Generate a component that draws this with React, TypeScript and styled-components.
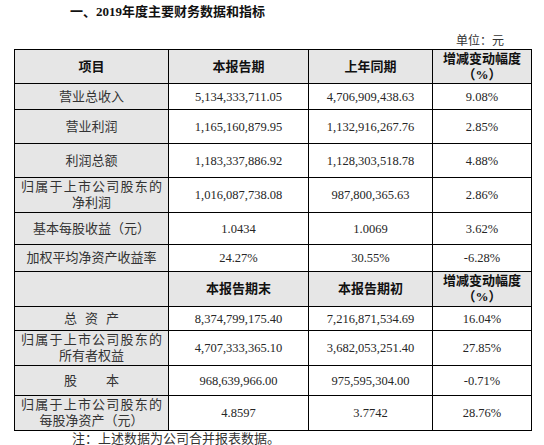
import styled, {createGlobalStyle} from "styled-components";

const GlobalStyle = createGlobalStyle`
  html, body {
    margin: 0;
    padding: 0;
    background: #fff;
  }

  body {
    font-family: "Liberation Serif", "Noto Sans CJK SC", serif;
    color: #222;
  }
`

const Page = styled.div`
  width: 544px;
  height: 445px;
  overflow: hidden;
`

const Title = styled.h1`
  margin: 0;
  padding: 3px 0 0 70px;
  font-family: "Liberation Serif", "Noto Sans CJK SC", serif;
  font-size: 13px;
  font-weight: 700;
  line-height: 18px;
  color: #111;
`

const Unit = styled.div`
  margin-top: 12px;
  padding-right: 40px;
  text-align: right;
  font-size: 12px;
  line-height: 16px;
  color: #333;
`

const Table = styled.table`
  margin-left: 14px;
  width: 517px;
  border-collapse: collapse;
  table-layout: fixed;
`

const Row = styled.tr<{ $h: number }>`
  height: ${p => p.$h}px;
`

const Cell = styled.td<{ $shade?: boolean, $bold?: boolean }>`
  border: 1px solid #000;
  padding: 0;
  text-align: center;
  vertical-align: middle;
  font-size: ${p => p.$bold ? "13px" : "12.5px"};
  font-weight: ${p => p.$bold ? 700 : 400};
  line-height: 16px;
  background: ${p => p.$shade ? "#e6e6e6" : "#fff"};
  color: ${p => p.$bold ? "#111" : "#262626"};
  white-space: nowrap;
`

const Label = styled.span<{ $gap?: number }>`
  font-size: 13px;
  color: #333;
  letter-spacing: ${p => p.$gap || 0}px;
  margin-right: ${p => -(p.$gap || 0)}px;
`

const Line = styled.span<{ $gap?: number }>`
  display: block;
  font-size: 13px;
  color: #333;
  letter-spacing: ${p => p.$gap || 0}px;
  margin-right: ${p => -(p.$gap || 0)}px;
`

const Note = styled.div`
  padding-left: 72px;
  font-size: 13px;
  line-height: 15px;
  color: #333;
`

type DataRow = {
    label: React.ReactNode
    cur: string
    prev: string
    pct: string
    h: number
}

const twoLine = (second: string) => <>
    <Line $gap={1.2}>归属于上市公司股东的</Line>
    <Line>{second}</Line>
</>

const firstRows: DataRow[] = [
    {label: <Label>营业总收入</Label>, cur: "5,134,333,711.05", prev: "4,706,909,438.63", pct: "9.08%", h: 26},
    {label: <Label>营业利润</Label>, cur: "1,165,160,879.95", prev: "1,132,916,267.76", pct: "2.85%", h: 34},
    {label: <Label>利润总额</Label>, cur: "1,183,337,886.92", prev: "1,128,303,518.78", pct: "4.88%", h: 34},
    {label: twoLine("净利润"), cur: "1,016,087,738.08", prev: "987,800,365.63", pct: "2.86%", h: 35},
    {label: <Label>基本每股收益（元）</Label>, cur: "1.0434", prev: "1.0069", pct: "3.62%", h: 32},
    {label: <Label>加权平均净资产收益率</Label>, cur: "24.27%", prev: "30.55%", pct: "-6.28%", h: 27},
]

const secondRows: DataRow[] = [
    {label: <Label $gap={8}>总资产</Label>, cur: "8,374,799,175.40", prev: "7,216,871,534.69", pct: "16.04%", h: 24},
    {label: twoLine("所有者权益"), cur: "4,707,333,365.10", prev: "3,682,053,251.40", pct: "27.85%", h: 35},
    {label: <Label $gap={29}>股本</Label>, cur: "968,639,966.00", prev: "975,595,304.00", pct: "-0.71%", h: 30},
    {label: twoLine("每股净资产（元）"), cur: "4.8597", prev: "3.7742", pct: "28.76%", h: 35},
]

const Header = (props: { first: string, cur: string, prev: string, h: number }) =>
    <Row $h={props.h}>
        <Cell $shade $bold>{props.first}</Cell>
        <Cell $shade $bold>{props.cur}</Cell>
        <Cell $shade $bold>{props.prev}</Cell>
        <Cell $shade $bold>增减变动幅度<br/>（%）</Cell>
    </Row>

const Body = (props: { rows: DataRow[] }) => <>
    {props.rows.map((r, i) =>
        <Row $h={r.h} key={i}>
            <Cell $shade>{r.label}</Cell>
            <Cell>{r.cur}</Cell>
            <Cell>{r.prev}</Cell>
            <Cell>{r.pct}</Cell>
        </Row>
    )}
</>

export default function App() {
    return (
        <Page>
            <GlobalStyle/>
            <Title>一、2019年度主要财务数据和指标</Title>
            <Unit>单位：元</Unit>
            <Table>
                <colgroup>
                    <col style={{width: 154}}/>
                    <col style={{width: 140}}/>
                    <col style={{width: 124}}/>
                    <col style={{width: 99}}/>
                </colgroup>
                <tbody>
                <Header first="项目" cur="本报告期" prev="上年同期" h={34}/>
                <Body rows={firstRows}/>
                <Header first="" cur="本报告期末" prev="本报告期初" h={35}/>
                <Body rows={secondRows}/>
                </tbody>
            </Table>
            <Note>注：上述数据为公司合并报表数据。</Note>
        </Page>
    )
}
